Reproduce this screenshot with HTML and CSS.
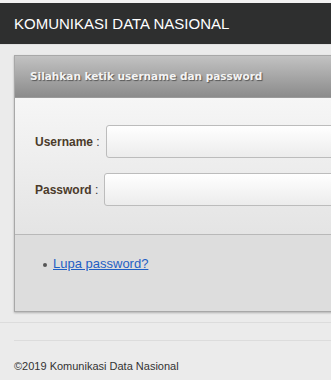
FILE: index.html
```html
<!DOCTYPE html>
<html lang="en">
<head>
    <meta charset="UTF-8">
    <meta name="viewport" content="width=device-width, initial-scale=1.0">
    <title>Komunikasi Data Nasional</title>
    <link rel="stylesheet" href="styles.css">
</head>
<body>
    <div class="topbar">KOMUNIKASI DATA NASIONAL</div>
    <div class="wrap">
        <div class="panel">
            <div class="panel-head">Silahkan ketik username dan password</div>
            <form class="panel-body">
                <div class="row">
                    <label for="username"><b>Username</b> :</label>
                    <input type="text" id="username" class="field">
                </div>
                <div class="row">
                    <label for="password"><b>Password</b> :</label>
                    <input type="password" id="password" class="field">
                </div>
            </form>
            <div class="panel-foot">
                <ul>
                    <li><a href="#">Lupa password?</a></li>
                </ul>
            </div>
        </div>
        <div class="rule"></div>
    </div>
    <footer>&copy;2019 Komunikasi Data Nasional</footer>
</body>
</html>
```

FILE: styles.css
```css
html, body {
    overflow: hidden;
}
body {
    margin: 0;
    padding: 0;
    background-color: #ebebeb;
    font-family: 'Liberation Sans', Arial, sans-serif;
    border-top: 3px solid #f2f2f2;
}
.topbar {
    background-color: #2e2f2f;
    color: #ffffff;
    font-size: 15px;
    height: 41px;
    line-height: 41px;
    padding-left: 14px;
    border-bottom: 1px solid #e0e0e0;
}
.wrap {
    padding: 10px 0 0 14px;
}
.panel {
    width: 440px;
    border: 1px solid #a8a8a8;
    box-shadow: 0 1px 2px rgba(0,0,0,0.25);
}
.panel-head {
    height: 41px;
    line-height: 40px;
    padding-left: 15px;
    background: linear-gradient(#c2c2c2, #8b8b8b);
    border-bottom: 1px solid #9a9a9a;
    color: #f4f4f4;
    font-family: 'DejaVu Sans', Verdana, sans-serif;
    font-size: 10.5px;
    font-weight: bold;
    text-shadow: 1px 1px 1px #555;
}
.panel-body {
    margin: 0;
    padding: 27px 0 28px 20px;
    background: linear-gradient(#f6f6f6, #e4e4e4);
    border-bottom: 1px solid #b8b8b8;
    display: flex;
    flex-direction: column;
    gap: 15px;
}
.row {
    display: flex;
    align-items: center;
    gap: 6px;
}
.row label {
    font-size: 12px;
    color: #333;
}
.row label b {
    color: #4b3b2b;
}
.field {
    width: 300px;
    height: 33px;
    box-sizing: border-box;
    margin: 0;
    border: 1px solid #bcbcbc;
    border-radius: 3px;
    background: linear-gradient(#ffffff, #ececec);
}
.panel-foot {
    background-color: #dddddd;
    height: 76px;
    box-sizing: border-box;
    padding-top: 21px;
}
.panel-foot ul {
    margin: 0;
    padding-left: 28px;
    list-style: none;
    font-size: 13px;
}
.panel-foot li::before {
    content: "";
    display: inline-block;
    width: 4px;
    height: 4px;
    border-radius: 50%;
    background-color: #555;
    margin-right: 6px;
    vertical-align: middle;
}
.panel-foot a {
    color: #1f5fc4;
}
.rule {
    margin-top: 10px;
    border-top: 1px solid #dcdcdc;
    margin-left: -14px;
}
.rule::after {
    content: "";
    display: block;
    margin: 17px 0 0 14px;
    border-top: 1px solid #dcdcdc;
}
footer {
    padding: 19px 0 0 14px;
    font-size: 11px;
    color: #333;
}
```
